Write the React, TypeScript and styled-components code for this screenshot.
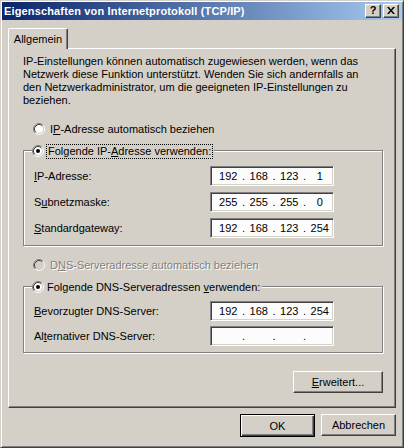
import { Fragment } from 'react';
import styled, { createGlobalStyle } from 'styled-components';

const GlobalStyle = createGlobalStyle`
  html, body {
    margin: 0;
    padding: 0;
    background: #d4d0c8;
  }
  body {
    font-family: 'Liberation Sans', Arial, sans-serif;
    font-size: 11px;
    color: #000;
  }
`;

const face = '#d4d0c8';

const Window = styled.div`
  box-sizing: border-box;
  width: 404px;
  height: 448px;
  padding: 1px;
  background: ${face};
  border: 1px solid;
  border-color: ${face} #404040 #404040 ${face};
  box-shadow: inset 1px 1px #fff, inset -1px -1px #808080;
  display: flex;
  flex-direction: column;
`;

const TitleBar = styled.div`
  height: 18px;
  display: flex;
  align-items: center;
  padding: 0 3px 0 2px;
  background: linear-gradient(to right, #0a246a, #a6caf0);
`;

const Title = styled.span`
  flex: 1;
  color: #fff;
  font-weight: bold;
  font-size: 11px;
  letter-spacing: 0.15px;
  white-space: nowrap;
`;

const CaptionButtons = styled.div`
  display: flex;
  gap: 2px;
  margin-top: -1px;
`;

const CaptionButton = styled.div`
  box-sizing: border-box;
  width: 16px;
  height: 14px;
  background: ${face};
  border: 1px solid;
  border-color: #fff #404040 #404040 #fff;
  box-shadow: inset -1px -1px #808080;
  display: flex;
  align-items: center;
  justify-content: center;
  font-weight: bold;
  font-size: 11px;
  line-height: 1;
`;

const Body = styled.div`
  flex: 1;
  display: flex;
  flex-direction: column;
  padding: 8px 6px 0 6px;
`;

const TabStrip = styled.div`
  display: flex;
  position: relative;
  z-index: 1;
  margin-bottom: -1px;
`;

const Tab = styled.div`
  box-sizing: border-box;
  width: 60px;
  height: 21px;
  padding-bottom: 1px;
  background: ${face};
  border-left: 1px solid #fff;
  border-top: 1px solid #fff;
  border-right: 1px solid #404040;
  border-radius: 2px 2px 0 0;
  box-shadow: inset -1px 0 #808080;
  display: flex;
  align-items: center;
  justify-content: center;
`;

const TabPanel = styled.div`
  box-sizing: border-box;
  height: 360px;
  padding: 6px 12px 0 14px;
  border: 1px solid;
  border-color: #fff #404040 #404040 #fff;
  box-shadow: inset -1px -1px #808080;
  display: flex;
  flex-direction: column;
`;

const Intro = styled.p`
  margin: 0;
  line-height: 13px;
`;

const RadioRow = styled.div<{ $disabled?: boolean }>`
  height: 16px;
  display: flex;
  align-items: center;
  gap: 5px;
  padding-left: 10px;
  margin-top: ${({ $disabled }) => ($disabled ? '11px' : '14px')};
  color: ${({ $disabled }) => ($disabled ? '#808080' : '#000')};
  text-shadow: ${({ $disabled }) => ($disabled ? '1px 1px 0 #fff' : 'none')};
`;

const GroupBox = styled.div<{ $gap: number; $bottom: number }>`
  margin-top: 13px;
  padding: 0 0 ${({ $bottom }) => $bottom}px 10px;
  border: 1px solid #808080;
  box-shadow: inset 1px 1px #fff, 1px 1px #fff;
  display: flex;
  flex-direction: column;
  gap: ${({ $gap }) => $gap}px;
`;

const Legend = styled.div`
  align-self: flex-start;
  height: 16px;
  margin: -8px 0 1px -2px;
  padding: 0 2px 0 0;
  background: ${face};
  display: flex;
  align-items: center;
  gap: 3px;
`;

const FocusLabel = styled.span`
  padding: 0 1px;
  line-height: 13px;
  outline: 1px dotted #000;
  outline-offset: 0;
`;

const FieldRow = styled.div`
  display: flex;
  align-items: center;
  height: 20px;
`;

const FieldLabel = styled.span`
  width: 176px;
`;

const IpBox = styled.div`
  box-sizing: border-box;
  width: 124px;
  height: 20px;
  padding-left: 4px;
  background: #fcfcfc;
  border: 1px solid;
  border-color: #808080 #fff #fff #808080;
  box-shadow: inset 1px 1px #404040, inset -1px -1px ${face};
  display: grid;
  grid-template-columns: 1fr 4px 1fr 4px 1fr 4px 1fr;
  align-items: center;
`;

const Octet = styled.span`
  text-align: center;
`;

const Dot = styled.span`
  text-align: center;
`;

const PanelFooter = styled.div`
  display: flex;
  justify-content: flex-end;
  margin-top: 18px;
`;

const Button = styled.div<{ $width: number; $default?: boolean }>`
  box-sizing: border-box;
  width: ${({ $width }) => $width}px;
  height: ${({ $default }) => ($default ? 23 : 22)}px;
  background: ${face};
  border: 1px solid;
  border-color: ${({ $default }) =>
    $default ? '#000' : '#fff #404040 #404040 #fff'};
  box-shadow: ${({ $default }) =>
    $default
      ? 'inset 1px 1px #fff, inset -1px -1px #404040, inset -2px -2px #808080'
      : 'inset -1px -1px #808080'};
  display: flex;
  align-items: center;
  justify-content: center;
`;

const DialogButtons = styled.div`
  display: flex;
  justify-content: flex-end;
  gap: 6px;
  margin-top: 6px;
`;

const Key = styled.u`
  text-decoration-thickness: 1px;
  text-underline-offset: 1px;
`;

const Radio = ({ checked, disabled }: { checked?: boolean; disabled?: boolean }) => (
  <svg width="12" height="12" viewBox="0 0 12 12" style={{ flex: 'none' }}>
    <circle cx="6" cy="6" r="4" fill={disabled ? face : '#fff'} />
    <path d="M2.11 9.89 A5.5 5.5 0 0 1 9.89 2.11" fill="none" stroke="#808080" />
    <path d="M9.89 2.11 A5.5 5.5 0 0 1 2.11 9.89" fill="none" stroke="#fff" />
    <path d="M2.82 9.18 A4.5 4.5 0 0 1 9.18 2.82" fill="none" stroke="#404040" />
    <path d="M9.18 2.82 A4.5 4.5 0 0 1 2.82 9.18" fill="none" stroke={face} />
    {checked && <circle cx="6" cy="6" r="2" fill="#000" />}
  </svg>
);

const IpField = ({ value }: { value?: string[] }) => (
  <IpBox>
    {[0, 1, 2, 3].map((i) => (
      <Fragment key={i}>
        <Octet>{value ? value[i] : ''}</Octet>
        {i < 3 && <Dot>.</Dot>}
      </Fragment>
    ))}
  </IpBox>
);

const App = () => (
  <>
    <GlobalStyle />
    <Window>
      <TitleBar>
        <Title>Eigenschaften von Internetprotokoll (TCP/IP)</Title>
        <CaptionButtons>
          <CaptionButton>?</CaptionButton>
          <CaptionButton>
            <svg width="8" height="7" viewBox="0 0 8 7">
              <path d="M0 0h2l2 2.5L6 0h2L5 3.5 8 7H6L4 4.5 2 7H0l3-3.5z" fill="#000" />
            </svg>
          </CaptionButton>
        </CaptionButtons>
      </TitleBar>
      <Body>
        <TabStrip>
          <Tab>Allgemein</Tab>
        </TabStrip>
        <TabPanel>
          <Intro>
            IP-Einstellungen können automatisch zugewiesen werden, wenn das
            <br />
            Netzwerk diese Funktion unterstützt. Wenden Sie sich andernfalls an
            <br />
            den Netzwerkadministrator, um die geeigneten IP-Einstellungen zu
            <br />
            beziehen.
          </Intro>
          <RadioRow>
            <Radio />
            <span>
              I<Key>P</Key>-Adresse automatisch beziehen
            </span>
          </RadioRow>
          <GroupBox $gap={6} $bottom={7}>
            <Legend>
              <Radio checked />
              <FocusLabel>
                Folgende IP-<Key>A</Key>dresse verwenden:
              </FocusLabel>
            </Legend>
            <FieldRow>
              <FieldLabel>
                <Key>I</Key>P-Adresse:
              </FieldLabel>
              <IpField value={['192', '168', '123', '1']} />
            </FieldRow>
            <FieldRow>
              <FieldLabel>
                S<Key>u</Key>bnetzmaske:
              </FieldLabel>
              <IpField value={['255', '255', '255', '0']} />
            </FieldRow>
            <FieldRow>
              <FieldLabel>
                <Key>S</Key>tandardgateway:
              </FieldLabel>
              <IpField value={['192', '168', '123', '254']} />
            </FieldRow>
          </GroupBox>
          <RadioRow $disabled>
            <Radio disabled />
            <span>
              D<Key>N</Key>S-Serveradresse automatisch beziehen
            </span>
          </RadioRow>
          <GroupBox $gap={5} $bottom={6}>
            <Legend>
              <Radio checked />
              <span>
                Folgende DNS-Serveradressen <Key>v</Key>erwenden:
              </span>
            </Legend>
            <FieldRow>
              <FieldLabel>
                <Key>B</Key>evorzugter DNS-Server:
              </FieldLabel>
              <IpField value={['192', '168', '123', '254']} />
            </FieldRow>
            <FieldRow>
              <FieldLabel>
                Al<Key>t</Key>ernativer DNS-Server:
              </FieldLabel>
              <IpField />
            </FieldRow>
          </GroupBox>
          <PanelFooter>
            <Button $width={90}>
              <span>
                <Key>E</Key>rweitert...
              </span>
            </Button>
          </PanelFooter>
        </TabPanel>
        <DialogButtons>
          <Button $width={75} $default>
            OK
          </Button>
          <Button $width={75}>Abbrechen</Button>
        </DialogButtons>
      </Body>
    </Window>
  </>
);

export default App;
